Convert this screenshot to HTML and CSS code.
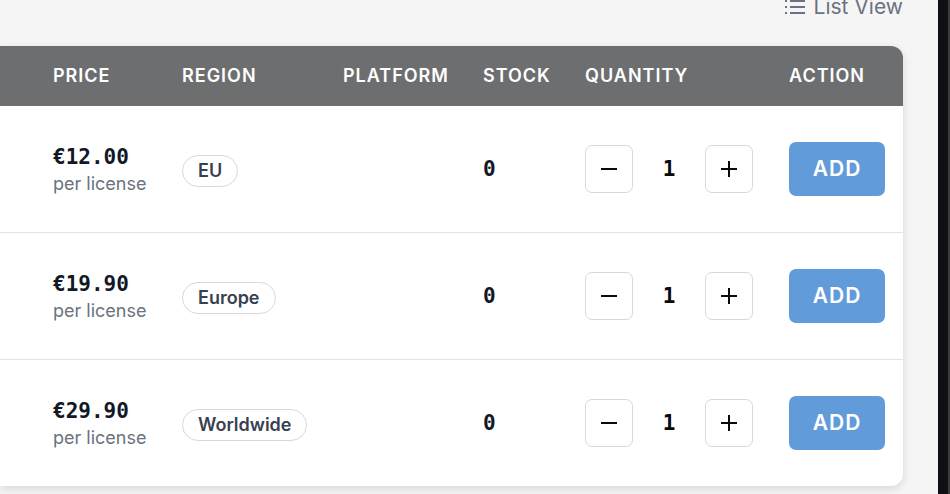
FILE: index.html
```html
<!DOCTYPE html>
<html lang="en">
<head>
<meta charset="utf-8">
<title>Licenses</title>
<link rel="stylesheet" href="styles.css">
</head>
<body>
<svg class="sprite" aria-hidden="true">
  <symbol id="minus" viewBox="0 0 24 24"><path d="M4 12h16"/></symbol>
  <symbol id="plus" viewBox="0 0 24 24"><path d="M4 12h16M12 4v16"/></symbol>
</svg>
<div class="page">
  <main class="content">
    <div class="toolbar">
      <button class="view-toggle" type="button">
        <svg class="list-icon" viewBox="0 0 22 22" aria-hidden="true"><path d="M1 5h2M6 5h15M1 11h2M6 11h15M1 17h2M6 17h15"/></svg>
        List View
      </button>
    </div>
    <div class="card">
      <table class="products">
        <colgroup>
          <col><col class="col-price"><col class="col-region"><col class="col-platform"><col class="col-stock"><col class="col-quantity"><col class="col-action">
        </colgroup>
        <thead>
          <tr><td></td><th>Price</th><th>Region</th><th>Platform</th><th>Stock</th><th>Quantity</th><th>Action</th></tr>
        </thead>
        <tbody>
          <tr>
            <td></td>
            <td><div class="price">€12.00</div><div class="unit">per license</div></td>
            <td><span class="badge">EU</span></td>
            <td></td>
            <td class="stock">0</td>
            <td><div class="stepper"><button class="step" type="button" aria-label="Decrease"><svg><use href="#minus"/></svg></button><output class="count">1</output><button class="step" type="button" aria-label="Increase"><svg><use href="#plus"/></svg></button></div></td>
            <td><button class="add" type="button">ADD</button></td>
          </tr>
          <tr>
            <td></td>
            <td><div class="price">€19.90</div><div class="unit">per license</div></td>
            <td><span class="badge">Europe</span></td>
            <td></td>
            <td class="stock">0</td>
            <td><div class="stepper"><button class="step" type="button" aria-label="Decrease"><svg><use href="#minus"/></svg></button><output class="count">1</output><button class="step" type="button" aria-label="Increase"><svg><use href="#plus"/></svg></button></div></td>
            <td><button class="add" type="button">ADD</button></td>
          </tr>
          <tr>
            <td></td>
            <td><div class="price">€29.90</div><div class="unit">per license</div></td>
            <td><span class="badge">Worldwide</span></td>
            <td></td>
            <td class="stock">0</td>
            <td><div class="stepper"><button class="step" type="button" aria-label="Decrease"><svg><use href="#minus"/></svg></button><output class="count">1</output><button class="step" type="button" aria-label="Increase"><svg><use href="#plus"/></svg></button></div></td>
            <td><button class="add" type="button">ADD</button></td>
          </tr>
        </tbody>
      </table>
    </div>
  </main>
  <div class="edge"></div>
</div>
</body>
</html>
```
FILE: styles.css
```css
* {
  box-sizing: border-box;
}

body {
  margin: 0;
  overflow: hidden;
  background: #f5f5f5;
  color: #111827;
  font-family: Inter, "Liberation Sans", sans-serif;
  font-size: 21px;
  line-height: 30px;
}

button {
  padding: 0;
  border: 0;
  background: none;
  color: inherit;
  font: inherit;
}

svg {
  fill: none;
  stroke: currentColor;
  stroke-width: 2;
}

.sprite {
  display: none;
}

.page {
  display: flex;
  min-height: 100vh;
}

.content {
  flex: 1;
  min-width: 0;
  padding-right: 35px;
}

.toolbar {
  display: flex;
  justify-content: flex-end;
  margin: -8px 0 24px;
}

.view-toggle {
  display: flex;
  align-items: center;
  gap: 8px;
  color: #6b7280;
}

.list-icon {
  width: 22px;
  height: 22px;
}

.card {
  overflow: hidden;
  border-radius: 0 12px 12px 0;
  background: #fff;
  box-shadow: 0 3px 9px rgba(0, 0, 0, 0.12);
}

.products {
  width: 100%;
  border-collapse: separate;
  border-spacing: 0;
  table-layout: fixed;
  white-space: nowrap;
}

.col-price {
  width: 129px;
}

.col-region {
  width: 161px;
}

.col-platform {
  width: 140px;
}

.col-stock {
  width: 102px;
}

.col-quantity {
  width: 204px;
}

.col-action {
  width: 132px;
}

.products thead {
  background: #6d6e70;
  color: #fff;
}

.products th {
  padding: 15px 18px;
  font-size: 18px;
  font-weight: 600;
  letter-spacing: 1px;
  text-align: left;
  text-transform: uppercase;
}

.products tbody td {
  padding: 36px 18px;
  border-bottom: 1px solid #e2e2e2;
  vertical-align: middle;
}

.products tbody tr:last-child td {
  border-bottom: 0;
}

.products td:first-child {
  padding: 0;
}

.price,
.stock,
.count {
  font-family: "DejaVu Sans Mono", monospace;
  font-weight: 700;
}

.unit {
  color: #6b7280;
  font-size: 18px;
  line-height: 24px;
}

.badge {
  display: inline-block;
  margin-top: 4px;
  padding: 0 15px;
  border: 1px solid #d9d9d9;
  border-radius: 16px;
  color: #374151;
  font-size: 18px;
  font-weight: 600;
}

.stepper {
  display: flex;
  align-items: center;
  justify-content: space-between;
  color: #0a0a0a;
}

.step {
  display: flex;
  align-items: center;
  justify-content: center;
  width: 48px;
  height: 48px;
  border: 1px solid #d9d9d9;
  border-radius: 7px;
}

.step svg {
  width: 24px;
  height: 24px;
}

.add {
  display: block;
  width: 100%;
  padding: 12px 0;
  border-radius: 7px;
  background: #629bda;
  color: #fff;
  font-weight: 600;
  letter-spacing: 1px;
}

.edge {
  width: 12px;
  border-right: 2px solid #3c3c3f;
  background: #0f1015;
}
```
